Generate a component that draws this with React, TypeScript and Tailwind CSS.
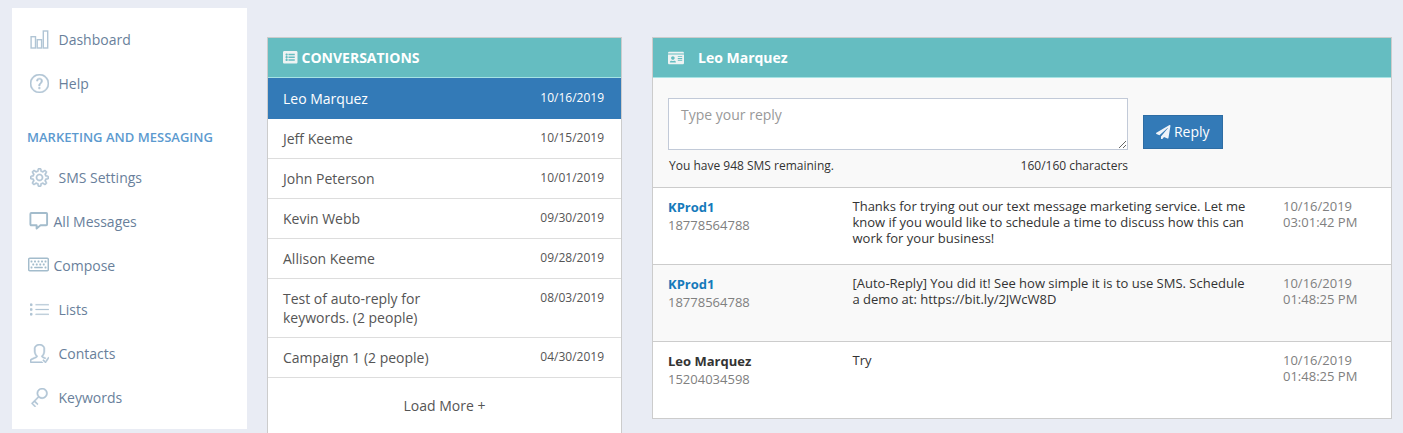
import type { ReactNode } from "react";
import { SlQuestion, SlSettings, SlList, SlUserFollowing, SlKey } from "react-icons/sl";
import { FaListAlt, FaIdCard, FaPaperPlane, FaRegKeyboard } from "react-icons/fa";

function BarsIcon() {
  return (
    <svg width="19" height="19" viewBox="0 0 19 19" fill="none" stroke="currentColor" strokeWidth="1.4">
      <rect x="1.1" y="6.7" width="4.4" height="11.3" />
      <rect x="7.2" y="9.7" width="4.4" height="8.3" />
      <rect x="13.3" y="1" width="4.4" height="17" />
    </svg>
  );
}

function CommentIcon() {
  return (
    <svg width="20" height="20" viewBox="0 0 20 20" fill="none" stroke="currentColor" strokeWidth="1.9" strokeLinejoin="round">
      <path d="M2.3 2h14.9q.9 0 .9.9v10.4q0 .9-.9.9h-5.7L7.6 17.6v-3.4H2.3q-.9 0-.9-.9V2.9q0-.9.9-.9z" />
    </svg>
  );
}

function NavItem({ icon, label, tight }: { icon: ReactNode; label: string; tight?: boolean }) {
  return (
    <a className={tight ? "flex h-11 items-center gap-[4.5px] pl-[16px]" : "flex h-11 items-center gap-[9.5px] pl-[18px]"}>
      <span className={tight ? "-mt-[3px] flex w-[21px] justify-center text-[#a3bccc]" : "-mt-px text-[#b1c5d5]"}>{icon}</span>
      <span>{label}</span>
    </a>
  );
}

const conversations = [
  { name: "Jeff Keeme", date: "10/15/2019" },
  { name: "John Peterson", date: "10/01/2019" },
  { name: "Kevin Webb", date: "09/30/2019" },
  { name: "Allison Keeme", date: "09/28/2019" },
  { name: "Test of auto-reply for keywords. (2 people)", date: "08/03/2019" },
  { name: "Campaign 1 (2 people)", date: "04/30/2019" },
];

const messages = [
  {
    from: "KProd1",
    phone: "18778564788",
    own: true,
    text: "Thanks for trying out our text message marketing service. Let me know if you would like to schedule a time to discuss how this can work for your business!",
    time: "03:01:42 PM",
  },
  {
    from: "KProd1",
    phone: "18778564788",
    own: true,
    text: "[Auto-Reply] You did it! See how simple it is to use SMS. Schedule a demo at: https://bit.ly/2JWcW8D",
    time: "01:48:25 PM",
  },
  { from: "Leo Marquez", phone: "15204034598", own: false, text: "Try", time: "01:48:25 PM" },
];

export default function App() {
  return (
    <div className="flex h-[433px] w-[1403px] items-start overflow-hidden bg-[#e9ecf4] pl-3 font-['Open_Sans',sans-serif] text-sm">
      <nav className="mt-2 h-[421px] w-[235px] shrink-0 bg-white pt-2.5 text-[#697f9b]">
        <NavItem icon={<BarsIcon />} label="Dashboard" />
        <NavItem icon={<SlQuestion size={19} strokeWidth={30} stroke="currentColor" />} label="Help" />
        <h3 className="flex h-[50px] items-center pt-3 pl-[15px] text-[13px] font-semibold tracking-[0.02px] text-[#5c9acf]">
          MARKETING AND MESSAGING
        </h3>
        <NavItem icon={<SlSettings size={19} strokeWidth={30} stroke="currentColor" />} label="SMS Settings" />
        <NavItem tight icon={<CommentIcon />} label="All Messages" />
        <NavItem tight icon={<FaRegKeyboard size={21} />} label="Compose" />
        <NavItem icon={<SlList size={19} strokeWidth={10} stroke="currentColor" />} label="Lists" />
        <NavItem icon={<SlUserFollowing size={19} strokeWidth={30} stroke="currentColor" />} label="Contacts" />
        <NavItem icon={<SlKey size={19} strokeWidth={30} stroke="currentColor" />} label="Keywords" />
      </nav>

      <section className="mt-[37px] ml-5 h-[420px] w-[355px] shrink-0 border border-[#ccc] bg-white text-[#555]">
        <h2 className="flex h-10 items-center gap-1 border-b border-[#a6e3e4] bg-[#65bdc1] pl-[15px] font-bold text-white">
          <FaListAlt size={14.5} className="text-[#eef3f3]" />
          CONVERSATIONS
        </h2>
        <div className="flex h-[41px] justify-between bg-[#337ab7] pt-[11px] pr-[17px] pl-[15px] leading-[19px] text-white">
          <span>Leo Marquez</span>
          <span className="text-xs leading-[17px]">10/16/2019</span>
        </div>
        {conversations.map((c) => (
          <div key={c.name} className="flex justify-between border-b border-[#ddd] py-2.5 pr-[17px] pl-[15px] leading-[19px]">
            <span className="w-[165px]">{c.name}</span>
            <span className="text-xs leading-[17px]">{c.date}</span>
          </div>
        ))}
        <div className="flex h-14 items-center justify-center">Load More +</div>
      </section>

      <section className="mt-[37px] ml-[30px] w-[740px] shrink-0 border border-[#ccc] bg-white text-[13px] text-[#333]">
        <h2 className="flex h-10 items-center gap-[14px] border-b border-[#a6e3e4] bg-[#65bdc1] pl-[15px] text-sm font-bold text-white">
          <FaIdCard size={16} className="text-[#eef3f3]" />
          Leo Marquez
        </h2>
        <div className="flex h-[110px] items-start gap-[15px] border-b border-[#ccc] bg-[#f9f9f9] pt-5 pl-[15px]">
          <div className="w-[460px]">
            <textarea
              placeholder="Type your reply"
              className="block h-[52px] w-full border border-[#c2cad8] bg-white px-3 py-1.5 text-sm placeholder:text-[#999]"
            />
            <div className="flex justify-between pt-[7px] pl-px text-xs leading-[18px]">
              <span>You have 948 SMS remaining.</span>
              <span>160/160 characters</span>
            </div>
          </div>
          <button className="mt-[17px] flex h-[34px] w-20 items-center justify-center gap-[3px] border border-[#2e6da4] bg-[#337ab7] text-sm text-white">
            <FaPaperPlane size={14.5} className="text-[#eef3f8]" />
            Reply
          </button>
        </div>
        {messages.map((m, i) => (
          <div
            key={i}
            className={
              i % 2 === 1
                ? "flex h-[77px] border-b border-[#ccc] bg-[#f9f9f9] pt-2.5 pl-[15px] leading-4"
                : "flex h-[77px] border-b border-[#ccc] bg-white pt-2.5 pl-[15px] leading-4 last:h-[76px] last:border-b-0"
            }
          >
            <div className="w-[184.5px] leading-[18px]">
              <div className={m.own ? "font-bold text-[#157abb]" : "font-bold"}>{m.from}</div>
              <div className="text-[#808080]">{m.phone}</div>
            </div>
            <p className="w-[400px]">{m.text}</p>
            <div className="ml-[30.5px] text-[#808080]">
              <div>10/16/2019</div>
              <div>{m.time}</div>
            </div>
          </div>
        ))}
      </section>
    </div>
  );
}
